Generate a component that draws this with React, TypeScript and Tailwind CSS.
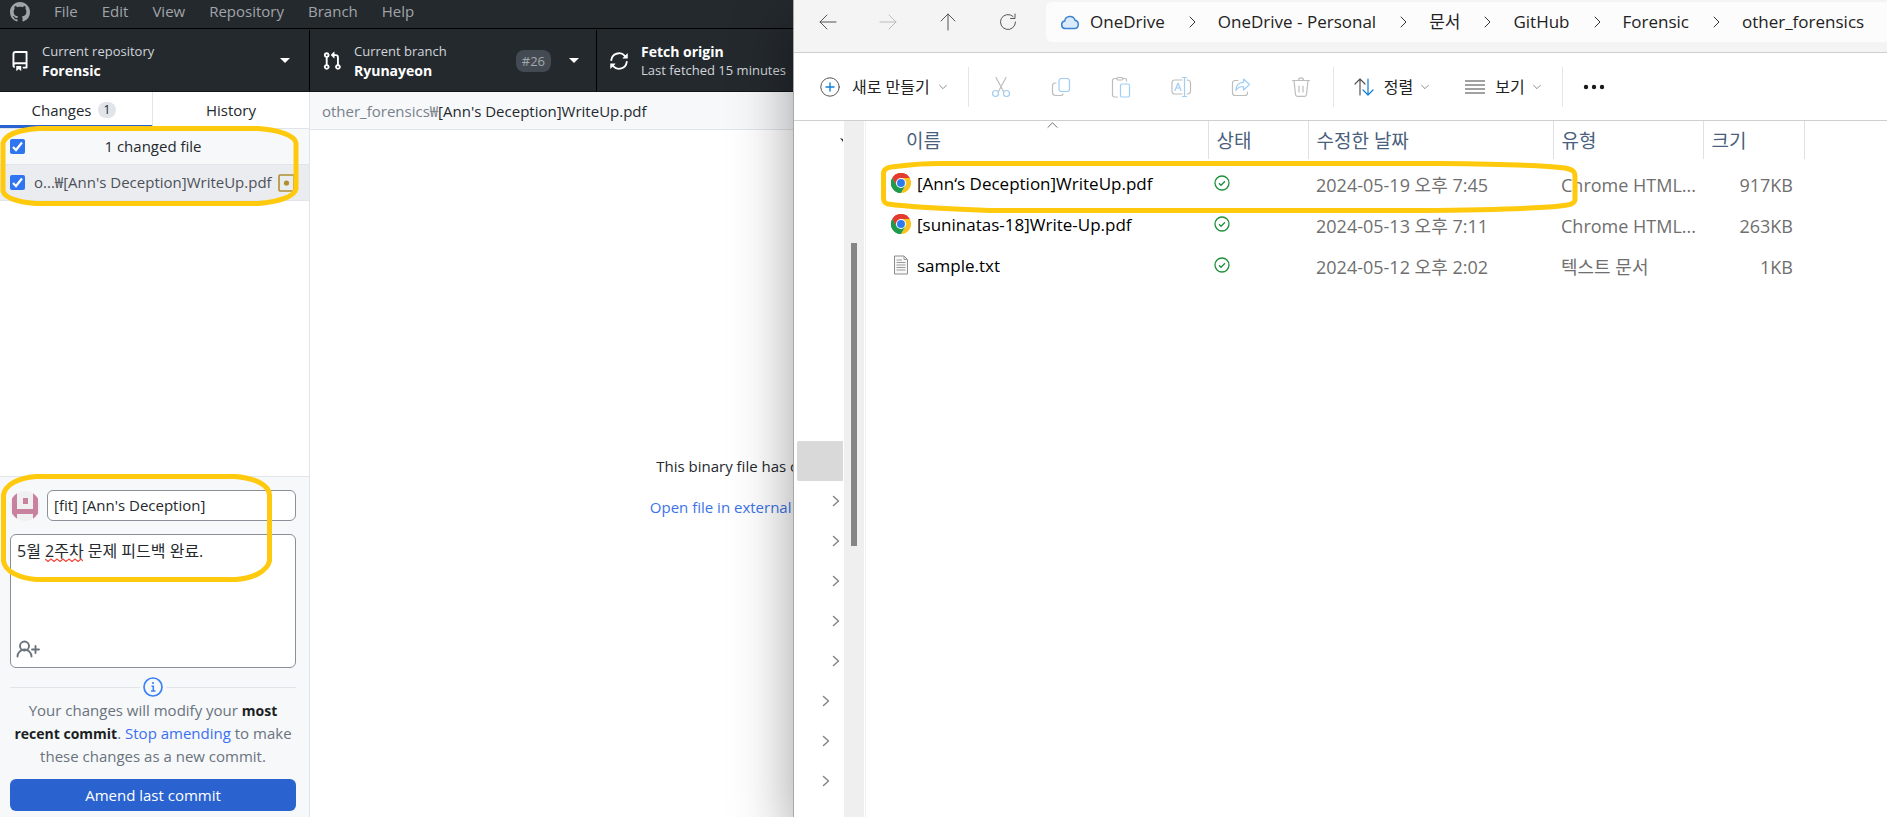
import React from "react";

const OCT = {
  mark: "M8 0c4.42 0 8 3.58 8 8a8.013 8.013 0 0 1-5.45 7.59c-.4.08-.55-.17-.55-.38 0-.27.01-1.13.01-2.2 0-.75-.25-1.23-.54-1.48 1.78-.2 3.65-.88 3.65-3.95 0-.88-.31-1.59-.82-2.15.08-.2.36-1.02-.08-2.12 0 0-.67-.22-2.2.82-.64-.18-1.32-.27-2-.27-.68 0-1.36.09-2 .27-1.53-1.03-2.2-.82-2.2-.82-.44 1.1-.16 1.92-.08 2.12-.51.56-.82 1.28-.82 2.15 0 3.06 1.86 3.75 3.64 3.95-.23.2-.44.55-.51 1.07-.46.21-1.61.55-2.33-.66-.15-.24-.6-.83-1.23-.82-.67.01-.27.38.01.53.34.19.73.9.82 1.13.16.45.68 1.31 2.69.94 0 .67.01 1.3.01 1.49 0 .21-.15.45-.55.38A7.995 7.995 0 0 1 0 8c0-4.42 3.58-8 8-8Z",
  repo: "M2 2.5A2.5 2.5 0 0 1 4.5 0h8.75a.75.75 0 0 1 .75.75v12.5a.75.75 0 0 1-.75.75h-2.5a.75.75 0 0 1 0-1.5h1.75v-2h-8a1 1 0 0 0-.714 1.7.75.75 0 1 1-1.072 1.05A2.495 2.495 0 0 1 2 11.5Zm10.5-1h-8a1 1 0 0 0-1 1v6.708A2.486 2.486 0 0 1 4.5 9h8ZM5 12.25a.25.25 0 0 1 .25-.25h3.5a.25.25 0 0 1 .25.25v3.25a.25.25 0 0 1-.4.2l-1.45-1.087a.249.249 0 0 0-.3 0L5.4 15.7a.25.25 0 0 1-.4-.2Z",
  pull: "M1.5 3.25a2.25 2.25 0 1 1 3 2.122v5.256a2.251 2.251 0 1 1-1.5 0V5.372A2.25 2.25 0 0 1 1.5 3.25Zm5.677-.177L9.573.677A.25.25 0 0 1 10 .854V2.5h1A2.5 2.5 0 0 1 13.5 5v5.628a2.251 2.251 0 1 1-1.5 0V5a1 1 0 0 0-1-1h-1v1.646a.25.25 0 0 1-.427.177L7.177 3.427a.25.25 0 0 1 0-.354ZM3.75 2.5a.75.75 0 1 0 0 1.5.75.75 0 0 0 0-1.5Zm0 9.5a.75.75 0 1 0 0 1.5.75.75 0 0 0 0-1.5Zm8.25.75a.75.75 0 1 0 1.5 0 .75.75 0 0 0-1.5 0Z",
  sync: "M1.705 8.005a.75.75 0 0 1 .834.656 5.5 5.5 0 0 0 9.592 2.97l-1.204-1.204a.25.25 0 0 1 .177-.427h3.646a.25.25 0 0 1 .25.25v3.646a.25.25 0 0 1-.427.177l-1.38-1.38A7.002 7.002 0 0 1 1.05 8.84a.75.75 0 0 1 .656-.834ZM8 2.5a5.487 5.487 0 0 0-4.131 1.869l1.204 1.204A.25.25 0 0 1 4.896 6H1.25A.25.25 0 0 1 1 5.75V2.104a.25.25 0 0 1 .427-.177l1.38 1.38A7.002 7.002 0 0 1 14.95 7.16a.75.75 0 0 1-1.49.178A5.5 5.5 0 0 0 8 2.5Z",
};

const Oct = ({ d, className }: { d: string; className: string }) => (
  <svg viewBox="0 0 16 16" fill="currentColor" className={className} aria-hidden="true">
    <path d={d} />
  </svg>
);

const Caret = () => (
  <svg viewBox="0 0 10 5" className="h-[5px] w-[10px] shrink-0 fill-white" aria-hidden="true">
    <path d="M0 0h10L5 5z" />
  </svg>
);

const Line = ({ d, box = 20, className }: { d: string; box?: number; className: string }) => (
  <svg
    viewBox={`0 0 ${box} ${box}`}
    fill="none"
    stroke="currentColor"
    strokeLinecap="round"
    strokeLinejoin="round"
    className={className}
    aria-hidden="true"
  >
    <path d={d} />
  </svg>
);

const menus = ["File", "Edit", "View", "Repository", "Branch", "Help"];

function Check({ id, label }: { id: string; label: string }) {
  return (
    <span className="relative flex size-[15px] shrink-0">
      <input
        id={id}
        type="checkbox"
        defaultChecked
        aria-label={label}
        className="size-[15px] appearance-none rounded-xs bg-white checked:bg-[#2f74f0]"
      />
      <svg viewBox="0 0 15 15" className="pointer-events-none absolute inset-0 size-[15px]" aria-hidden="true">
        <path d="M3 8l3 3 6-7.500" fill="none" stroke="#fff" strokeWidth="2.200" />
      </svg>
    </span>
  );
}

function Toolbar() {
  return (
    <div className="flex h-[63px] border-b border-[#141414] bg-[#24292e] pt-px text-[13px] leading-[19px] text-[#d1d5da]">
      <button type="button" className="flex w-[310px] items-center border-r border-black pr-[19px] pl-[10px] text-left">
        <Oct d={OCT.repo} className="mr-3 size-5 text-white" />
        <span className="flex-1">
          Current repository
          <b className="block text-sm leading-[19px] text-white">Forensic</b>
        </span>
        <Caret />
      </button>
      <button type="button" className="flex w-[287px] items-center border-r border-black pr-[17px] pl-3 text-left">
        <Oct d={OCT.pull} className="mr-3 size-5 text-white" />
        <span className="flex-1">
          Current branch
          <b className="block text-sm leading-[19px] text-white">Ryunayeon</b>
        </span>
        <span className="mr-[18px] rounded-lg bg-[#444a51] px-[6px] py-[2px] leading-[18px] text-[#a3a8ae]">#26</span>
        <Caret />
      </button>
      <button type="button" className="flex flex-1 items-center pl-3 text-left">
        <Oct d={OCT.sync} className="mr-3 size-5 -scale-x-100 text-white" />
        <span>
          <b className="block text-sm leading-[19px] text-white">Fetch origin</b>
          Last fetched 15 minutes
        </span>
      </button>
    </div>
  );
}

function CommitForm() {
  return (
    <form className="relative border-t border-[#e1e4e8] bg-[#f6f8fa] pt-[13px] pr-[13px] pb-[6px] pl-[10px]">
      <div className="flex items-center gap-[7px]">
        <svg viewBox="0 0 30 30" className="size-[30px] shrink-0 rounded-full" aria-hidden="true">
          <path d="M0 0h30v30H0z" fill="#f0f0f0" />
          <path d="M2 2h5v16h16V2h5v26h-5v-5H7v5H2zM13 7h5v6h-5z" fill="#c9829d" />
        </svg>
        <input
          aria-label="Summary"
          defaultValue="[fit] [Ann's Deception]"
          className="h-[31px] w-full min-w-0 flex-1 rounded-md border border-[#8a8f98] bg-white px-[6px] pb-[2px] text-[15px] text-[#24292e]"
        />
      </div>
      <div className="relative mt-[13px] h-[134px]">
        <textarea
          aria-label="Description"
          spellCheck={false}
          defaultValue="5월 2주차 문제 피드백 완료."
          className="size-full resize-none rounded-md border border-[#8a8f98] bg-white px-[6px] py-1 text-base text-[#24292e]"
        />
        <svg viewBox="0 0 38 4" className="pointer-events-none absolute top-[24px] left-[35px] h-1 w-[38px]" aria-hidden="true">
          <path
            d="M0 1l3 2.500 3-2.500 3 2.500 3-2.500 3 2.500 3-2.500 3 2.500 3-2.500 3 2.500 3-2.500 3 2.500 3-2.500 2 2"
            fill="none"
            stroke="#f0483e"
            strokeWidth="1.200"
          />
        </svg>
        <button type="button" aria-label="Add co-authors" className="absolute bottom-[10px] left-[6px] text-[#6a737d]">
          <svg viewBox="0 0 24 18" fill="none" stroke="currentColor" strokeWidth="1.900" strokeLinecap="round" className="h-[18px] w-6" aria-hidden="true">
            <circle cx="8.500" cy="6" r="4.500" />
            <path d="M1.500 16.500a7 7 0 0 1 14 0M19.500 6v7M16 9.500h7" />
          </svg>
        </button>
      </div>
      <div className="mt-[9px] flex items-center gap-[3px]">
        <hr className="flex-1 border-[#e1e4e8]" />
        <svg viewBox="0 0 20 20" className="size-5" fill="none" stroke="#3b82f6" aria-hidden="true">
          <circle cx="10" cy="10" r="9" strokeWidth="1.700" />
          <path d="M8.500 9.200h1.800v4.800M8 14h4.500" strokeWidth="1.500" />
          <circle cx="10" cy="6" r="1.100" fill="#3b82f6" stroke="none" />
        </svg>
        <hr className="flex-1 border-[#e1e4e8]" />
      </div>
      <p className="mt-[2px] text-center text-[15px] leading-[23px] whitespace-nowrap text-[#6a737d]">
        Your changes will modify your <b className="text-sm text-[#1b1f23]">most</b>
        <br />
        <b className="text-sm text-[#1b1f23]">recent commit</b>.{" "}
        <a href="#stop" className="text-[#3b6ff0]">
          Stop amending
        </a>{" "}
        to make
        <br />
        these changes as a new commit.
      </p>
      <button type="submit" className="mt-[11px] h-8 w-full rounded-md bg-[#2a63d0] text-[15px] text-white">
        Amend last commit
      </button>
      <svg viewBox="0 0 272 110" className="pointer-events-none absolute -top-[4px] left-0 h-[110px] w-[272px]" fill="none" aria-hidden="true">
        <path
          d="M36 3.500H235C255 5 269 12 269.500 22V88C267 98 254 105 236 106.500H36C18 105 5 98 3.500 88V22C5 12 17 5 36 3.500Z"
          stroke="#ffc90e"
          strokeWidth="5"
        />
      </svg>
    </form>
  );
}

function Sidebar() {
  return (
    <aside className="flex w-[310px] shrink-0 flex-col border-r border-[#e1e4e8] text-[15px] text-[#24292e]">
      <div className="flex h-[37px] border-b border-[#e1e4e8]">
        <button type="button" className="flex w-[153px] items-center justify-center gap-[6px] border-r border-b-3 border-r-[#e1e4e8] border-b-[#2a63d0] pt-[3px] pr-[4px]">
          Changes
          <span className="rounded-full bg-[#e1e4e8] px-[6px] text-xs leading-4">1</span>
        </button>
        <button type="button" className="flex-1">
          History
        </button>
      </div>
      <div className="relative">
        <div className="flex h-9 items-center border-b border-[#e1e4e8] bg-[#f6f8fa] pl-[10px]">
          <Check id="all" label="Include all files" />
          <label htmlFor="all" className="flex-1 pr-[28px] text-center">
            1 changed file
          </label>
        </div>
        <div className="flex h-9 items-center border-b border-[#e1e4e8] bg-[#ebecf0] pr-[14px] pl-[10px]">
          <Check id="file" label="Include file" />
          <label htmlFor="file" className="ml-[9px] flex-1 whitespace-nowrap text-[#4b5158]">
            o...₩[Ann's Deception]WriteUp.pdf
          </label>
          <svg viewBox="0 0 17 18" className="h-[18px] w-[17px]" aria-hidden="true">
            <rect x="1" y="1" width="15" height="16" rx="1" fill="none" stroke="#b08f30" strokeWidth="1.600" />
            <circle cx="8.500" cy="9" r="2.600" fill="#b08f30" />
          </svg>
        </div>
        <svg viewBox="0 0 300 82" className="pointer-events-none absolute -top-[4px] left-0 h-[82px] w-[300px]" fill="none" aria-hidden="true">
          <path
            d="M38 3.500H258C278 5 295 10 296 18V64C294 72 278 77 258 78.500H36C18 77 5 73 3 66V18C5 10 18 5 38 3.500Z"
            stroke="#ffc90e"
            strokeWidth="5"
          />
        </svg>
      </div>
      <div className="flex-1" />
      <CommitForm />
    </aside>
  );
}

function GitHubDesktop() {
  return (
    <section aria-label="Repository window" className="flex w-[1210px] shrink-0 flex-col bg-white">
      <nav className="flex h-[29px] items-center border-b border-black bg-[#24292e] pb-[5px] pl-[10px] text-[15px] text-[#a0a4a8]">
        <Oct d={OCT.mark} className="mr-6 size-5" />
        <div className="flex gap-6">
          {menus.map((m) => (
            <button type="button" key={m}>
              {m}
            </button>
          ))}
        </div>
      </nav>
      <Toolbar />
      <div className="flex flex-1">
        <Sidebar />
        <main className="flex flex-1 flex-col">
          <div className="h-[38px] border-b border-[#e1e4e8] bg-[#f6f8fa] pl-3 text-[15px] leading-[38px] text-[#24292e]">
            <span className="text-[#79818a]">other_forensics₩</span>[Ann's Deception]WriteUp.pdf
          </div>
          <div className="flex flex-1 flex-col items-center justify-center gap-[18px] pt-[26px] pr-[10px] text-[15px] leading-[23px] text-[#24292e]">
            <p>This binary file has changed.</p>
            <a href="#open" className="text-[#3b73e8]">
              Open file in external program.
            </a>
          </div>
        </main>
      </div>
    </section>
  );
}

const crumbs = ["OneDrive", "OneDrive - Personal", "문서", "GitHub", "Forensic", "other_forensics"];

function AddressBar() {
  return (
    <header className="flex h-[53px] items-center border-b border-[#cfcfcf] bg-[#f4f4f4] pb-[9px] pl-6">
      <div className="flex items-center gap-10 text-[#555]">
        <button type="button" aria-label="Back">
          <Line d="M18 10H2M9 3L2 10l7 7" className="size-5" />
        </button>
        <button type="button" aria-label="Forward" className="text-[#bcbcbc]">
          <Line d="M2 10h16M11 3l7 7-7 7" className="size-5" />
        </button>
        <button type="button" aria-label="Up">
          <Line d="M10 18V2M3 9l7-7 7 7" className="size-5" />
        </button>
        <button type="button" aria-label="Refresh">
          <Line d="M17.500 10a7.500 7.500 0 1 1-2.500-5.600M17 2v4.500h-4.500" className="size-5" />
        </button>
      </div>
      <div className="ml-[28px] flex h-10 flex-1 items-center rounded-l-md bg-[#fcfcfc] pl-[14px] text-[17px] whitespace-nowrap text-[#222]">
        <svg viewBox="0 0 20 16" className="mr-[10px] h-4 w-5" aria-hidden="true">
          <path
            d="M5 14.500a3.800 3.800 0 0 1-.3-7.500A5.300 5.300 0 0 1 15 6.300a4.200 4.200 0 0 1 0 8.200z"
            fill="#dcebfb"
            stroke="#3b82d0"
            strokeWidth="1.500"
          />
        </svg>
        {crumbs.map((c, i) => (
          <React.Fragment key={c}>
            {i > 0 && <Line d="M3 1l5 5-5 5" box={12} className="mr-[19px] ml-[22px] size-3 shrink-0 text-[#333]" />}
            <a href="#crumb">{c}</a>
          </React.Fragment>
        ))}
      </div>
    </header>
  );
}

const Down = () => <Line d="M2 4l4 4 4-4" box={12} className="size-[10px] text-[#777]" />;

const G = "#bdbdbd";
const B = "#9fcdf3";

const tools: { label: string; art: React.ReactNode }[] = [
  {
    label: "Cut",
    art: (
      <>
        <path d="M5 0.500l7.500 14M15 0.500L7.500 14.500" stroke={G} />
        <circle cx="4.500" cy="16.500" r="3" stroke={B} />
        <circle cx="15.500" cy="16.500" r="3" stroke={B} />
      </>
    ),
  },
  {
    label: "Copy",
    art: (
      <>
        <path d="M5 6H4a2.500 2.500 0 0 0-2.500 2.500v7A3 3 0 0 0 4.500 18.500h5a2.500 2.500 0 0 0 2.500-1.500" stroke={G} />
        <rect x="8" y="1.500" width="10.500" height="13" rx="2.500" stroke={B} />
      </>
    ),
  },
  {
    label: "Paste",
    art: (
      <>
        <path d="M6.500 20H3.500a2 2 0 0 1-2-2V3.500a2 2 0 0 1 2-2H6M12 1.500h2a1.500 1.500 0 0 1 1.500 1.500v1" stroke={G} />
        <rect x="6" y="0.500" width="6" height="2.500" rx="1.200" stroke={G} />
        <rect x="9.500" y="7" width="9" height="13" rx="1.500" stroke={B} />
      </>
    ),
  },
  {
    label: "Rename",
    art: (
      <>
        <path d="M11 17H3.500A2.500 2.500 0 0 1 1 14.500v-9A2.500 2.500 0 0 1 3.500 3H11M16 3a3.500 3 0 0 1 3.500 3v8a3.500 3 0 0 1-3.500 3" stroke={G} />
        <path d="M4 13.500L7 6l3 7.500M5 11h4M11.500 0.500h4M11.500 19.500h4M13.500 0.500v19" stroke={B} />
      </>
    ),
  },
  {
    label: "Share",
    art: (
      <>
        <path d="M7 3.500H4A2.500 2.500 0 0 0 1.500 6v10A2.500 2.500 0 0 0 4 18.500h10a2.500 2.500 0 0 0 2.500-2.500v-1" stroke={G} />
        <path d="M12.500 2l6 5.500-6 5.500v-3.500C9 9.500 6.500 11 5 13.500c0-5 3-8 7.500-8.200z" stroke={B} />
      </>
    ),
  },
  {
    label: "Delete",
    art: (
      <>
        <path d="M1.500 3.500h17M7.500 3.300a2.500 2.500 0 0 1 5 0M3 3.500l1.500 14a2 2 0 0 0 2 1.800h7a2 2 0 0 0 2-1.800L17 3.500M8 9v6M12 9v6" stroke={G} />
      </>
    ),
  },
];

function CommandBar() {
  return (
    <div className="flex h-[68px] items-center border-b border-[#cfcfcf] bg-white pl-[26px] text-base text-[#222]">
      <button type="button" className="flex items-center whitespace-nowrap">
        <svg viewBox="0 0 20 20" fill="none" strokeLinecap="round" className="mr-3 size-5" aria-hidden="true">
          <circle cx="10" cy="10" r="9.200" stroke="#555" />
          <path d="M10 6v8M6 10h8" stroke="#0f7fd8" strokeWidth="1.400" />
        </svg>
        <span className="mr-2">새로 만들기</span>
        <Down />
      </button>
      <span className="ml-5 h-10 w-px bg-[#e5e5e5]" />
      <div className="flex gap-10 pr-[22px] pl-[22px]">
        {tools.map((t) => (
          <button type="button" key={t.label} aria-label={t.label}>
            <svg viewBox="0 0 20 20" fill="none" strokeWidth="1.200" strokeLinecap="round" strokeLinejoin="round" className="size-5 overflow-visible" aria-hidden="true">
              {t.art}
            </svg>
          </button>
        ))}
      </div>
      <span className="h-10 w-px bg-[#e5e5e5]" />
      <button type="button" className="ml-5 flex items-center whitespace-nowrap">
        <svg viewBox="0 0 20 20" fill="none" strokeWidth="1.200" strokeLinecap="round" strokeLinejoin="round" className="mr-[10px] size-5" aria-hidden="true">
          <path d="M6 18V2M1 7l5-5 5 5" stroke="#555" />
          <path d="M14 2v16M9 13l5 5 5-5" stroke="#0f7fd8" />
        </svg>
        <span className="mr-[7px]">정렬</span>
        <Down />
      </button>
      <button type="button" className="ml-[35px] flex items-center whitespace-nowrap">
        <svg viewBox="0 0 20 20" className="mr-[10px] size-5" fill="none" stroke="#444" strokeWidth="1.200" aria-hidden="true">
          <path d="M0 4h20M0 8h20M0 12h20M0 16h20" />
        </svg>
        <span className="mr-[7px]">보기</span>
        <Down />
      </button>
      <span className="ml-5 h-10 w-px bg-[#e5e5e5]" />
      <button type="button" aria-label="More" className="ml-5">
        <svg viewBox="0 0 22 6" className="h-[6px] w-[22px] fill-[#1a1a1a]" aria-hidden="true">
          <circle cx="3" cy="3" r="2.200" />
          <circle cx="11" cy="3" r="2.200" />
          <circle cx="19" cy="3" r="2.200" />
        </svg>
      </button>
    </div>
  );
}

const Chrome = () => (
  <svg viewBox="0 0 48 48" className="mb-1 size-5" aria-hidden="true">
    <path d="M24 24L3.200 12A24 24 0 0 1 44.800 12z" fill="#e33b2e" />
    <path d="M44.800 12A24 24 0 0 1 24 48l10.400-18L34 12z" fill="#fcc31e" />
    <path d="M3.200 12A24 24 0 0 0 24 48l10.400-18H13.600z" fill="#1e9a4a" />
    <path d="M24 12h20.800L34.400 30z" fill="#fcc31e" />
    <path d="M3.200 12A24 24 0 0 1 44.800 12H24L13.600 30z" fill="#e33b2e" />
    <path d="M3.200 12L13.600 30 24 36l-4 12A24 24 0 0 1 3.200 12z" fill="#1e9a4a" />
    <circle cx="24" cy="24" r="12" fill="#fff" />
    <circle cx="24" cy="24" r="9.500" fill="#2a7bef" />
  </svg>
);

const Doc = () => (
  <svg viewBox="0 0 16 20" className="mx-[2px] mb-1 h-5 w-4" aria-hidden="true">
    <path d="M1.500 1H11l3.500 3.500V19h-13z" fill="#f8f8f8" stroke="#8c8c8c" />
    <path d="M11 1v3.500h3.500M3.500 5H9M3.500 7.500h9M3.500 10h9M3.500 12.500h9M3.500 15h9" fill="none" stroke="#9a9a9a" />
  </svg>
);

const files = [
  { name: "[Ann‘s Deception]WriteUp.pdf", date: "2024-05-19 오후 7:45", type: "Chrome HTML...", size: "917KB", pdf: true },
  { name: "[suninatas-18]Write-Up.pdf", date: "2024-05-13 오후 7:11", type: "Chrome HTML...", size: "263KB", pdf: true },
  { name: "sample.txt", date: "2024-05-12 오후 2:02", type: "텍스트 문서", size: "1KB", pdf: false },
];

const head = "border-r border-[#e0e0e0] pt-1 pl-2 text-left font-normal";

function FileTable() {
  return (
    <div className="relative min-w-0 flex-1 border-l border-[#f0f0f0]">
      <table className="w-[938px] table-fixed border-collapse text-lg whitespace-nowrap text-[#6f6f6f]">
        <colgroup>
          <col className="w-[342px]" />
          <col className="w-[100px]" />
          <col className="w-[245px]" />
          <col className="w-[150px]" />
          <col className="w-[101px]" />
        </colgroup>
        <thead className="text-[19px] text-[#4a5f7d]">
          <tr className="h-[38px]">
            <th className="relative border-r border-[#e0e0e0] pt-1 pl-10 text-left font-normal">
              이름
              <Line d="M1 8l5-5 5 5" box={12} className="absolute -top-px left-[181px] size-[11px] text-[#666]" />
            </th>
            <th className={head}>상태</th>
            <th className={head}>수정한 날짜</th>
            <th className={head}>유형</th>
            <th className={head}>크기</th>
          </tr>
        </thead>
        <tbody>
          <tr className="h-[5px]" aria-hidden="true">
            <td colSpan={5} />
          </tr>
          {files.map((f) => (
            <tr key={f.name} className="h-[41px]">
              <td className="pl-[25px]">
                <span className="flex items-center gap-[6px] text-[17px] text-black">
                  {f.pdf ? <Chrome /> : <Doc />}
                  {f.name}
                </span>
              </td>
              <td className="pl-[6px]">
                <svg viewBox="0 0 16 16" className="mb-[3px] size-4" fill="none" stroke="#1f8f3a" strokeWidth="1.300" aria-label="Synced">
                  <circle cx="8" cy="8" r="7" />
                  <path d="M5 8.300l2 2 4-4" />
                </svg>
              </td>
              <td className="pl-2">{f.date}</td>
              <td className="pl-2">{f.type}</td>
              <td className="pr-[11px] text-right">{f.size}</td>
            </tr>
          ))}
        </tbody>
      </table>
      <svg viewBox="0 0 700 56" className="pointer-events-none absolute top-[38px] left-[14px] h-14 w-[700px]" fill="none" aria-hidden="true">
        <path
          d="M60 4.500H560C620 5 660 6 685 9C694 11 695 13 695 17V41C694 45 690 46 680 47C650 50 600 51 540 51.500H110C70 50 30 48 8 45C4 44 3.500 42 3.500 38V14C4 9 8 8 20 7C35 5 48 4.500 60 4.500Z"
          stroke="#ffc90e"
          strokeWidth="5"
        />
      </svg>
    </div>
  );
}

function NavPane() {
  return (
    <>
      <div className="flex w-[50px] shrink-0 flex-col items-end pr-px text-[#858585]">
        <svg viewBox="0 0 3 4" className="mt-[17px] h-1 w-[3px] fill-[#333]" aria-hidden="true">
          <path d="M0 0l3 1v3z" />
        </svg>
        <div className="mt-[299px] h-10 w-[46px] rounded-l-xs bg-[#d9d9d9]" />
        {["a", "b", "c", "d", "e", "f", "g", "h"].map((k, i) => (
          <button type="button" key={k} aria-label="Expand" className={i < 5 ? "flex h-10 items-center pr-px" : "flex h-10 items-center pr-[11px]"}>
            <Line d="M3.500 1.500l5 4.500-5 4.500" box={12} className="size-3 stroke-[1.500px]" />
          </button>
        ))}
      </div>
      <div className="w-5 shrink-0 bg-[#efefef] pt-[122px]">
        <div className="mx-auto h-[303px] w-[6px] bg-[#858585]" />
      </div>
      <div className="w-px shrink-0" />
    </>
  );
}

export default function App() {
  return (
    <div className="flex min-h-screen overflow-hidden bg-white font-['Open_Sans','Noto_Sans_CJK_KR',sans-serif]">
      <div className="flex w-[793px] shrink-0 overflow-hidden">
        <GitHubDesktop />
      </div>
      <section
        aria-label="File explorer"
        className="z-10 flex min-w-0 flex-1 flex-col overflow-hidden border-l border-[#a8a8a8] bg-white shadow-[0_24px_56px_rgba(0,0,0,0.38)]"
      >
        <AddressBar />
        <CommandBar />
        <div className="flex flex-1">
          <NavPane />
          <FileTable />
        </div>
      </section>
    </div>
  );
}
